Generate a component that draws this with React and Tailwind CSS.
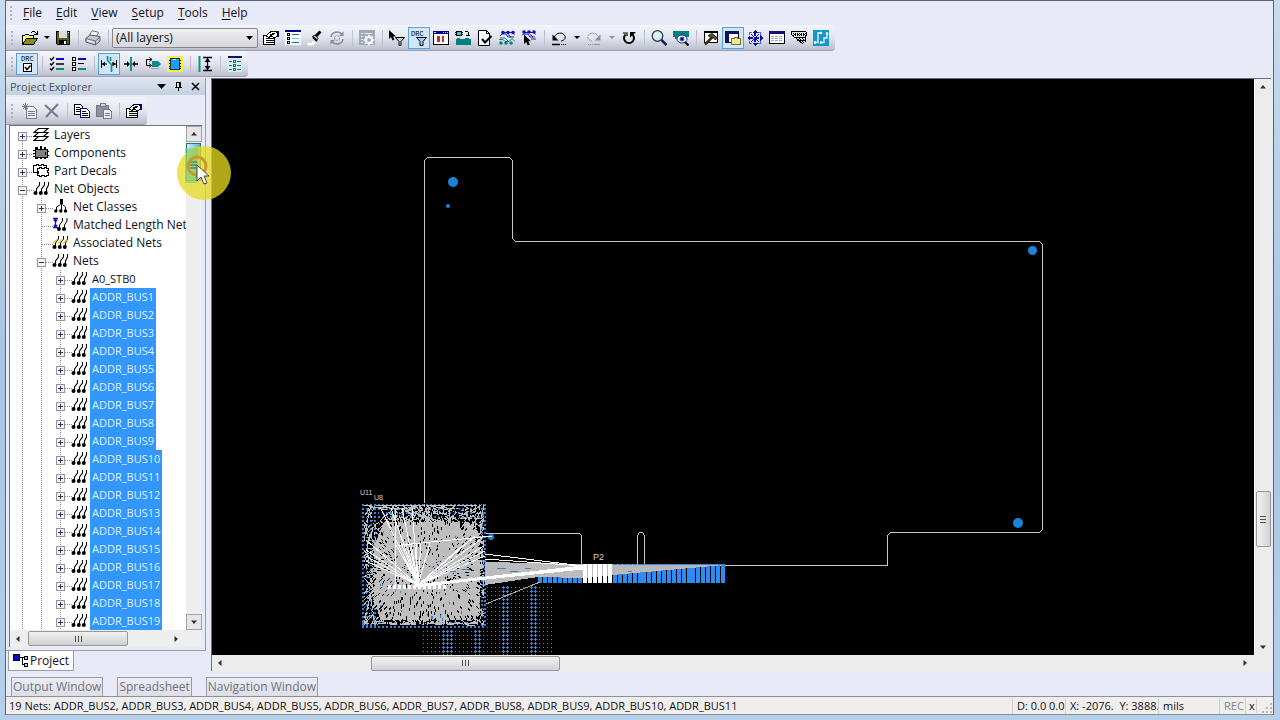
import React, { useState } from 'react'

const FONT = "font-['Open_Sans','Noto_Sans',sans-serif]"

// 16x16 toolbar glyphs, drawn on whole pixels
function Glyph({ children, w = 16, h = 16, smooth = false }) {
  return (
    <svg
      width={w}
      height={h}
      viewBox={`0 0 ${w} ${h}`}
      className="block shrink-0"
      fill="none"
      stroke="#000"
      shapeRendering={smooth ? 'auto' : 'crispEdges'}
      aria-hidden="true"
    >
      {children}
    </svg>
  )
}

const sheetLines = 'M3 8.5h8M3 10.5h8M3 12.5h8'

const icons = {
  open: (
    <Glyph>
      <path d="M0.5 14.5v-9h2l1-1h3l1 1h4v3" fill="#f4f08a" />
      <path d="M0.5 14.5l4-6h11l-4 6z" fill="#8c8c1a" />
      <path d="M9 2.5h1M10 1.5h3M13 2.5h1M14 3.5h1M15.5 1v4M12 4.5h4" />
    </Glyph>
  ),
  save: (
    <Glyph>
      <path d="M1.5 1.5h13v13h-12l-1-1z" fill="#5b5b10" />
      <path d="M4 1h8v7H4z" fill="#d8dbe4" stroke="none" />
      <path d="M4 10h8v5H4z" fill="#000" stroke="none" />
      <path d="M9 11h2v3H9zM13 2h1v1h-1z" fill="#fff" stroke="none" />
    </Glyph>
  ),
  print: (
    <Glyph smooth>
      <path d="M4.5 5L7 .8l6.500 1.500-2 4.700z" fill="#fff" stroke="#777" />
      <path d="M.8 8.500L5 5l10 1.500v4.500l-4.500 4-9.700-3z" fill="#c6c8d0" stroke="#5a5d66" />
      <path d="M.8 8.500l9.700 2.500 4.500-4M10.500 11v4" stroke="#6c6f78" />
      <path d="M2.500 10.500l6 1.800" stroke="#fff" />
    </Glyph>
  ),
  props: (
    <Glyph>
      <path d="M.5 5.500h11v9H.5z" fill="#fff" />
      <path d={sheetLines} />
      <path d="M3 6l5-4.500h5l2 1.500v3l-2 1h-3L8 5.500 6 7.500z" fill="#fff" />
      <path d="M7 4l4 1M9 3.500h3" />
      <path d="M14 1h2v6h-2z" fill="#000090" stroke="none" />
    </Glyph>
  ),
  list: (
    <Glyph>
      <path d="M0 1h16v14H0z" fill="#fff" stroke="none" />
      <path d="M0 0h16v2H0z" fill="#000090" stroke="none" />
      <path d="M2.500 3.500h2v2h-2zM2.500 7.500h2v2h-2zM2.500 11.500h2v2h-2z" />
      <path d="M7 4.500h7M7 12.500h7" stroke="#207070" />
      <path d="M7 8.500h7" stroke="#58d0e8" />
    </Glyph>
  ),
  brush: (
    <Glyph smooth>
      <path d="M0 13h5l1-2 3 2-3 2.500H1z" fill="#fff" stroke="none" />
      <path d="M5.500 6.500l4 4 1.500-2-3-3.500z" fill="#ddd" />
      <path d="M9 6l4.500-4.500" strokeWidth="3" />
      <path d="M6 7l4 4" strokeWidth="2" />
    </Glyph>
  ),
  refresh: (
    <Glyph smooth>
      <path d="M2 7a6 5.500 0 0 1 11-2.500M14 9A6 5.500 0 0 1 3 11.500" stroke="#858a96" strokeWidth="1.500" />
      <path d="M14.500 1.500v4.500H10zM1.500 14.500V10H6z" fill="#858a96" stroke="none" />
      <circle cx="8" cy="8" r="2.500" stroke="#858a96" strokeDasharray="2 1" />
    </Glyph>
  ),
  gearWindow: (
    <Glyph smooth>
      <path d="M0 0h16v15H0z" fill="#a3a8b6" stroke="none" />
      <path d="M2 3.500h2M5 3.500h8M2 6.500h2M2 9.500h2M2 12.500h2" stroke="#e8eaf2" />
      <circle cx="10" cy="10" r="3" stroke="#fff" strokeWidth="2" />
      <path d="M10 4.500v2M10 13.500v2M4.500 10h2M13.500 10h2M6.200 6.200l1.500 1.500M12.500 12.500l1.500 1.500M13.800 6.200l-1.500 1.500M6.200 13.800l1.500-1.500" stroke="#fff" strokeWidth="1.500" />
    </Glyph>
  ),
  selectFilter: (
    <Glyph smooth>
      <path d="M0 0v9l2-2 1.500 3.500 2-1L4 6.500h3z" fill="#000" stroke="none" />
      <path d="M6.500 7.500h9l-3.500 4v4h-2v-4z" fill="#c8ccd6" />
    </Glyph>
  ),
  drcFilter: (
    <Glyph w={20} h={18} smooth>
      <text x="2" y="7" fontSize="7" fill="#000" stroke="none" className="font-['Liberation_Mono',monospace]">DRC</text>
      <path d="M7.500 8.500h10l-3.500 4v4h-3v-4z" fill="#9fd0f0" />
    </Glyph>
  ),
  columns: (
    <Glyph>
      <path d="M.5 1.500h15v13H.5z" fill="#fff" />
      <path d="M0 1h16v3H0z" fill="#000090" stroke="none" />
      <path d="M1 2.500h2M10 2.500h1M12 2.500h1M14 2.500h1" stroke="#d8d8e8" />
      <path d="M4 6h3v6H4zM9 6h2v6H9z" fill="#c03030" stroke="none" />
    </Glyph>
  ),
  swapPart: (
    <Glyph>
      <path d="M1.500 1.500h5v4h-5z" fill="#40c0c0" />
      <path d="M0 2.500h1M0 4.500h1M7 2.500h1M7 4.500h1M10 1.500h3M13.500 2v3M11 5.500h4" />
      <path d="M1 9h15v6H1z" fill="#008078" stroke="none" />
      <path d="M2 8.500h3M10 8.500h4" stroke="#008078" />
    </Glyph>
  ),
  docCheck: (
    <Glyph smooth>
      <path d="M1.500.5h8l3 3v12h-11z" fill="#fff" />
      <path d="M9.500.5v3h3" />
      <path d="M5 9l3 3.500L14.500 6" strokeWidth="2.200" />
    </Glyph>
  ),
  dotsNets: (
    <Glyph smooth>
      <path d="M3 2.500h11l1.500 2M1 6l2-2h4l2 3h6M9 4.500l3 2.500" stroke="#2020b0" />
      <g fill="#1010b0" stroke="none"><circle cx="4" cy="2.500" r="1.800" /><circle cx="9" cy="2.500" r="1.800" /><circle cx="14" cy="2.500" r="1.800" /></g>
      <path d="M0 9.500h4l2 2h4l3-3 3 3M1 8h5l3 3" stroke="#108080" />
      <g fill="#088080" stroke="none"><circle cx="2" cy="13" r="1.800" /><circle cx="7" cy="13" r="1.800" /><circle cx="12" cy="13" r="1.800" /></g>
    </Glyph>
  ),
  dotsCursor: (
    <Glyph smooth>
      <path d="M2 2.500h11l1.500 2M1 5l2-1h4l2 3h5M9 4.500l3 2.500M10 9h5" stroke="#2020b0" />
      <g fill="#1010b0" stroke="none"><circle cx="3" cy="2" r="1.800" /><circle cx="8" cy="2" r="1.800" /><circle cx="13" cy="2" r="1.800" /></g>
      <path d="M3 4.500v9.500l2.200-2 1.600 3.500 2-1-1.500-3.200H10z" fill="#000" stroke="none" />
    </Glyph>
  ),
  undo: (
    <Glyph smooth>
      <path d="M3.500 7C5 2.500 12 1.500 14 6c1 3-1.500 4.500-4 5" />
      <path d="M1.500 4.500v6h6z" fill="#000" stroke="none" />
      <path d="M1 14.500h8" strokeWidth="1.500" />
      <path d="M10 14.500h6" strokeDasharray="1 1" />
    </Glyph>
  ),
  redo: (
    <Glyph smooth>
      <path d="M12.500 7C11 2.500 4 1.500 2 6c-1 3 1.500 4.500 4 5" stroke="#8a8f9b" strokeDasharray="2 .8" />
      <path d="M14.500 4.500v6h-6z" fill="#8a8f9b" stroke="none" />
      <path d="M2 14.500h5" stroke="#8a8f9b" strokeDasharray="1 1" />
      <path d="M8 14.500h6" stroke="#8a8f9b" />
    </Glyph>
  ),
  reload: (
    <Glyph smooth>
      <path d="M4.500 4.500a5 5 0 1 0 7 0" strokeWidth="2" />
      <path d="M9 2h6L9 7.500z" fill="#000" stroke="none" />
      <path d="M2 3h4v3" strokeWidth="1.200" />
    </Glyph>
  ),
  magnifier: (
    <Glyph smooth>
      <circle cx="6.500" cy="6" r="5.300" fill="#c4f0f6" stroke="#333" strokeWidth="1.200" />
      <path d="M4 4l2-1M5 7l4-3" stroke="#fff" strokeWidth="1.500" />
      <path d="M10.500 10l5 5" stroke="#102070" strokeWidth="2.500" />
    </Glyph>
  ),
  boardEye: (
    <Glyph smooth>
      <path d="M0 1h16v6h-2v2H2V7H0z" fill="#008080" stroke="none" />
      <ellipse cx="9" cy="9" rx="5" ry="4" fill="#fff" stroke="#203060" />
      <circle cx="9" cy="9" r="2" fill="#0000b0" stroke="#4060d0" />
      <path d="M12 12l3.500 3.500" strokeWidth="2" />
    </Glyph>
  ),
  hammer: (
    <Glyph smooth>
      <path d="M1.500 2.500h13v10h-13z" fill="#fff" />
      <path d="M1 2h14" strokeWidth="2" />
      <path d="M2 14.500l8-8" stroke="#3a2810" strokeWidth="2.500" />
      <path d="M5 5.500l4-2 5 4-1.500 2.500-3-3H7z" fill="#5c5c38" stroke="#222" />
    </Glyph>
  ),
  folderWindow: (
    <Glyph>
      <path d="M.5 1.500h13v11H.5z" fill="#fff" />
      <path d="M0 1h14v3H0zM0 4h4v9H0z" fill="#101060" stroke="none" />
      <path d="M6.500 14.500v-6h3v-1h3v1h3v6z" fill="#ece98a" stroke="#77742e" />
    </Glyph>
  ),
  pan: (
    <Glyph>
      <path d="M8 1v14M1 8h14" stroke="#0c0cb0" strokeWidth="2" strokeDasharray="5 1" />
      <path d="M4 4l3 3M12 4L9 7M4 12l3-3M12 12L9 9" stroke="#0c0cb0" />
      <path d="M8 0l3 3H5zM8 16l3-3H5zM0 8l3-3v6zM16 8l-3-3v6z" fill="#0c0cb0" stroke="none" />
      <path d="M2.500 5V2.500H5M11 2.500h2.500V5M2.500 11v2.500H5M13.500 11v2.500H11" stroke="#5060d0" />
    </Glyph>
  ),
  table: (
    <Glyph>
      <path d="M.5 1.500h15v12H.5z" fill="#fff" />
      <path d="M0 1h16v3H0z" fill="#101080" stroke="none" />
      <path d="M2 6.500h12M2 8.500h12M2 10.500h12" stroke="#9aa" strokeDasharray="3 1" />
    </Glyph>
  ),
  mesh: (
    <Glyph>
      <path d="M.5 1.500h14l1 1v3l-2 2H3.500l-3-3z" fill="#e4e4e0" />
      <path d="M2 3.500h13M2 5.500h13" strokeDasharray="1 1" />
      <path d="M3 4.500h12M4 7.500h10" strokeDasharray="2 1" />
      <path d="M5 8l7 6M8 8l5 5M11 8l3 3M14.500 7v5M6 10.500h7" />
    </Glyph>
  ),
  traceBlue: (
    <Glyph smooth>
      <path d="M0 0h16v16H0z" fill="#1296cc" stroke="none" />
      <path d="M1.500 12.500H5V3h3M8.500 12.500H11V8h3V4" stroke="#e8f8ff" strokeWidth="1.300" />
      <g fill="#fff" stroke="none"><circle cx="8" cy="3" r="1.300" /><circle cx="14" cy="3.500" r="1.300" /><circle cx="2" cy="12.500" r="1.300" /><circle cx="8" cy="12.500" r="1.300" /></g>
    </Glyph>
  ),
  drcCheck: (
    <Glyph w={18} h={18}>
      <text x="3" y="6" fontSize="7" fill="#000" stroke="none" className="font-['Liberation_Mono',monospace]">DRC</text>
      <path d="M5.500 8.500h8v8h-8z" fill="#fff" />
      <path d="M7 12l2 2.500 3.500-4" strokeWidth="1.500" shapeRendering="auto" />
    </Glyph>
  ),
  checks: (
    <Glyph smooth>
      <path d="M1 2.500l1.500 1.500L5 1M1 7.500L2.500 9 5 6M1 12.500L2.500 14 5 11" strokeWidth="1.300" />
      <path d="M7 3h8" stroke="#0a0ab8" strokeWidth="2" />
      <path d="M7 8h8" strokeWidth="1.500" />
      <path d="M7 13h8" stroke="#10887c" strokeWidth="2" />
    </Glyph>
  ),
  boxes: (
    <Glyph>
      <path d="M1.500 1.500h3v3h-3zM1.500 6.500h3v3h-3zM1.500 11.500h3v3h-3z" fill="#fff" />
      <path d="M7 2h8v2H7z" fill="#0a0ab8" stroke="none" />
      <path d="M7 7h6v1H7z" fill="#000" stroke="none" />
      <path d="M7 12h8v2H7z" fill="#10887c" stroke="none" />
    </Glyph>
  ),
  netSpacing: (
    <Glyph smooth>
      <path d="M.5 4v8M15.500 4v8M1 8h5M11 8h4" />
      <path d="M1 8l3-2.500v5zM14.500 8l-3-2.500v5z" fill="#000" stroke="none" />
      <path d="M6.500 0v4.500l4 4V16M9.500 1v4" stroke="#109088" strokeWidth="1.600" />
    </Glyph>
  ),
  converge: (
    <Glyph smooth>
      <path d="M8 1v14" stroke="#109088" strokeWidth="2" />
      <path d="M1 8h5M10 8h5" strokeWidth="1.300" />
      <path d="M7 8L4 5v6zM9 8l3-3v6z" fill="#000" stroke="none" />
    </Glyph>
  ),
  shove: (
    <Glyph smooth>
      <path d="M6.500 3.500H1.500v6h4M4.500 1.500l2.500 2-2.500 2M4 7.500l2.500 2L4 11.500" />
      <path d="M7 5h6l3 3-3 3H7z" fill="#0c8c88" stroke="none" />
      <path d="M6 12.500h8" stroke="#8ab" />
    </Glyph>
  ),
  chip: (
    <Glyph>
      <path d="M0 0h16v16H0z" fill="#f7ee5c" stroke="none" />
      <path d="M2 4.500h12M2 7.500h12M2 10.500h12M2 12.500h12" />
      <path d="M3.500 2.500h9v11h-9z" fill="#1c9ef0" stroke="#103060" />
      <path d="M6 3.500h3" stroke="#fff" />
    </Glyph>
  ),
  height: (
    <Glyph smooth>
      <path d="M2.500 0v16" stroke="#109088" strokeWidth="2" />
      <path d="M6 1.500h9M6 14.500h9M10.500 2v12" strokeWidth="1.300" />
      <path d="M10.500 2l3 4h-6zM10.500 14l3-4h-6z" fill="#000" stroke="none" />
    </Glyph>
  ),
  grid: (
    <Glyph>
      <path d="M1 2h14v14H1z" fill="#d7ecec" stroke="none" />
      <path d="M1 0h14v2H1z" fill="#10106c" stroke="none" />
      <path d="M2 5.500h3M10 5.500h4M2 9.500h3M10 9.500h4M2 13.500h3M10 13.500h4" stroke="#187878" />
      <path d="M6.500 4.500h2v2h-2zM6.500 8.500h2v2h-2zM6.500 12.500h2v2h-2z" stroke="#187878" />
    </Glyph>
  ),
  newSheet: (
    <Glyph>
      <path d="M4.500 3.500h7l3 3v9h-10z" fill="#eef0f6" stroke="#777c88" />
      <path d="M6 8.500h7M6 10.500h7M6 12.500h7M1 1l5 5M6 1L1 6M0 3.500h7M3.500 0v7" stroke="#777c88" />
    </Glyph>
  ),
  remove: (
    <Glyph smooth>
      <path d="M1 2l13 12M14 1L2 14" stroke="#767b88" strokeWidth="2" />
    </Glyph>
  ),
  copy: (
    <Glyph>
      <path d="M.5 1.500h6l2 2v8h-8z" fill="#fff" />
      <path d="M2 4.500h4M2 6.500h4M2 8.500h4" />
      <path d="M6.500 5.500h6l3 3v6h-9z" fill="#fff" stroke="#0a0a80" />
      <path d="M8 8.500h4M8 10.500h6M8 12.500h6" />
    </Glyph>
  ),
  paste: (
    <Glyph>
      <path d="M.5 2.500h12v11H.5z" fill="#8d92a0" stroke="#767b88" />
      <path d="M4 .5h5v3H4z" fill="#d5d8e2" stroke="#767b88" />
      <path d="M7.500 6.500h6l2 2v7h-8z" fill="#eef0f6" stroke="#767b88" />
      <path d="M9 10.500h5M9 12.500h5" stroke="#767b88" />
    </Glyph>
  ),
  layers: (
    <Glyph smooth>
      <path d="M1 13.500l4.500-4h9.500l-4.500 4zM1 9.500l4.500-4h9.500l-4.500 4zM1 5.500l4.500-4h9.500l-4.500 4z" fill="#fff" strokeWidth="1.200" />
    </Glyph>
  ),
  components: (
    <Glyph>
      <path d="M2 2h3v2H2zM7 1h2v3H7zM11 2h2v2h-2zM2 12h3v2H2zM7 12h2v2H7zM11 12h2v2h-2z" fill="#000" stroke="none" />
      <path d="M2.500 4.500h12v8h-12z" fill="#808080" />
      <path d="M0 5.500h3M0 8.500h3M0 11.500h3M14 6.500h2M14 10.500h2M12.500 7v3" />
    </Glyph>
  ),
  decals: (
    <Glyph>
      <path d="M.5 2.500h3v-1h2v1h3v-1h2v1h3v7H.5z" fill="#fff" />
      <path d="M4.500 5.500h2v-1h2v1h3v-1h2v1h2v2h-1v2h1v3h-2v1h-2v-1h-3v1h-2v-1h-2v-2h1v-2h-1z" fill="#fff" />
    </Glyph>
  ),
  nets: (
    <Glyph smooth>
      <path d="M6.500 1v3L3.500 8v4M11.500 1v3l-3 4v4M15.500 1v3l-2 4v4" strokeWidth="1.100" />
      <g fill="#000" stroke="none"><circle cx="2.500" cy="12" r="2" /><circle cx="7.800" cy="12" r="2" /><circle cx="12.800" cy="12" r="2" /></g>
    </Glyph>
  ),
  netClasses: (
    <Glyph smooth>
      <path d="M8 0h3v5H8z" fill="#000" stroke="none" />
      <path d="M9.500 5v8M8.500 5.500L4.500 8v4M10.500 5.500l3 2.500v4" />
      <g fill="#000" stroke="none"><circle cx="3.800" cy="12" r="1.700" /><circle cx="8.800" cy="12" r="1.700" /><circle cx="13.500" cy="12" r="1.700" /></g>
    </Glyph>
  ),
  matched: (
    <Glyph smooth>
      <path d="M1 1.500h5M1 10.500h5M3.500 2v8M2 4l1.500-2L5 4M2 8l1.500 2L5 8" stroke="#1010b8" strokeWidth="1.300" />
      <path d="M10.500 1v3l-3 4v4M15 1v3l-2.500 4v4" />
      <g fill="#000" stroke="none"><circle cx="7" cy="12" r="2" /><circle cx="12" cy="12" r="2" /></g>
    </Glyph>
  ),
  associated: (
    <Glyph smooth>
      <path d="M6.500 1v3L3.500 8v4M11.500 1v3l-3 4v4M15.500 1v3l-2 4v4" />
      <path d="M1 8.500L5 4.500M6 8.500l4-4M11 8.500l4-4" stroke="#d8d820" strokeWidth="1.500" />
      <g fill="#000" stroke="none"><circle cx="2.500" cy="12" r="2" /><circle cx="7.800" cy="12" r="2" /><circle cx="12.800" cy="12" r="2" /></g>
    </Glyph>
  ),
  project: (
    <Glyph>
      <path d="M.5 1.500h6v6h-6z" fill="#0a0ac8" />
      <path d="M7 4.500h4M9.500 4v8M9 11.500h2" />
      <path d="M11.500 3.500h3v3h-3zM11.500 10.500h3v3h-3z" fill="#b8d8b0" />
    </Glyph>
  ),
}

function ToolButton({ icon, label, active, disabled }) {
  return (
    <button
      type="button"
      aria-label={label}
      disabled={disabled}
      className={`flex h-[22px] w-[22px] shrink-0 items-center justify-center border ${
        active ? 'border-[#58a0dc] bg-[#d2e6f9]' : 'border-transparent hover:border-[#58a0dc]'
      }`}
    >
      {icons[icon]}
    </button>
  )
}

function Caret({ label, disabled, wide }) {
  return (
    <button type="button" aria-label={label} className={`flex h-[22px] shrink-0 items-center justify-center ${wide ? 'w-[13px]' : 'w-[11px]'}`}>
      <svg width="6" height="3" className="block" aria-hidden="true">
        <path d="M0 0h6L3 3z" fill={disabled ? '#8a8f9b' : '#000'} />
      </svg>
    </button>
  )
}

function Sep() {
  return (
    <span className="flex w-2 shrink-0 justify-center">
      <span className="h-4 w-px bg-[#bcc0cc]" />
    </span>
  )
}

function Grip() {
  return (
    <span className="mr-[6px] ml-1 flex w-[2px] shrink-0 flex-col gap-[2px]">
      {[0, 1, 2, 3].map((n) => (
        <span key={n} className="h-[2px] w-[2px] bg-[#b0b4c2]" />
      ))}
    </span>
  )
}

const menus = ['File', 'Edit', 'View', 'Setup', 'Tools', 'Help']

const mainTools = [
  ['props', 'Properties'],
  ['list', 'Display list'],
  ['brush', 'Highlight'],
  ['refresh', 'Refresh', 'disabled'],
  null,
  ['gearWindow', 'Options', 'disabled'],
  null,
  ['selectFilter', 'Selection filter'],
  ['drcFilter', 'DRC filter', 'active'],
  ['columns', 'Columns'],
  ['swapPart', 'Swap part'],
  ['docCheck', 'Verify'],
  ['dotsNets', 'Net pairs'],
  ['dotsCursor', 'Select nets'],
  null,
]

const viewTools = [
  ['hammer', 'Build'],
  ['folderWindow', 'Project explorer', 'active'],
  ['pan', 'Pan'],
  ['table', 'Spreadsheet'],
  ['mesh', 'Mesh'],
  ['traceBlue', 'Router'],
]

const routeTools = [
  ['drcCheck', 'DRC on', 'active'],
  null,
  ['checks', 'Check list'],
  ['boxes', 'Box list'],
  null,
  ['netSpacing', 'Net spacing', 'active'],
  ['converge', 'Converge'],
  ['shove', 'Shove'],
  ['chip', 'Component'],
  null,
  ['height', 'Length'],
  null,
  ['grid', 'Rules'],
]

function Tools({ items }) {
  return items.map((t, i) =>
    t ? (
      <ToolButton key={i} icon={t[0]} label={t[1]} active={t[2] === 'active'} disabled={t[2] === 'disabled'} />
    ) : (
      <Sep key={i} />
    )
  )
}

const barStyle =
  'flex w-fit shrink-0 items-center rounded-r-[4px] border-b border-[#9a9eae] bg-linear-to-b from-[#f4f5fc] via-[#e2e4ee] to-[#bdc0ce]'

function TopBars() {
  const [layer, setLayer] = useState('all')
  return (
    <header className="shrink-0">
      <nav className="flex h-6 items-center">
        <Grip />
        <div className="-ml-[2px] flex">
          {menus.map((m) => (
            <button key={m} type="button" className="px-[7px] text-[12px] leading-4 text-[#101018]">
              <span className="underline underline-offset-2">{m[0]}</span>
              {m.slice(1)}
            </button>
          ))}
        </div>
      </nav>
      <div className={`${barStyle} h-[26px] pr-[3px] pl-px`}>
        <Grip />
        <ToolButton icon="open" label="Open" />
        <Caret label="Recent files" />
        <ToolButton icon="save" label="Save" />
        <Sep />
        <ToolButton icon="print" label="Print" />
        <Sep />
        <div className="relative mr-[2px] flex w-[146px]">
          <select
            aria-label="Layer"
            value={layer}
            onChange={(e) => setLayer(e.target.value)}
            className="h-5 w-full appearance-none rounded-[2px] border border-[#85878f] bg-linear-to-b from-[#f0f0f1] to-[#d6d7da] pl-[3px] text-[12px] leading-4 text-[#101018]"
          >
            <option value="all">(All layers)</option>
          </select>
          <svg width="7" height="4" className="pointer-events-none absolute top-2 right-[5px]" aria-hidden="true">
            <path d="M0 0h7L3.500 4z" />
          </svg>
        </div>
        <Tools items={mainTools} />
        <ToolButton icon="undo" label="Undo" />
        <Caret label="Undo history" wide />
        <ToolButton icon="redo" label="Redo" disabled />
        <Caret label="Redo history" wide disabled />
        <ToolButton icon="reload" label="Redraw" />
        <Sep />
        <ToolButton icon="magnifier" label="Zoom" />
        <ToolButton icon="boardEye" label="View board" />
        <Sep />
        <Tools items={viewTools} />
      </div>
      <div className={`${barStyle} h-[26px] pr-[2px] pl-px`}>
        <span className="-mr-[3px] flex">
          <Grip />
        </span>
        <Tools items={routeTools} />
      </div>
    </header>
  )
}

const tree = [
  { depth: 0, icon: 'layers', label: 'Layers', box: '+' },
  { depth: 0, icon: 'components', label: 'Components', box: '+' },
  { depth: 0, icon: 'decals', label: 'Part Decals', box: '+' },
  { depth: 0, icon: 'nets', label: 'Net Objects', box: '-' },
  { depth: 1, icon: 'netClasses', label: 'Net Classes', box: '+' },
  { depth: 1, icon: 'matched', label: 'Matched Length Net', box: '' },
  { depth: 1, icon: 'associated', label: 'Associated Nets', box: '' },
  { depth: 1, icon: 'nets', label: 'Nets', box: '-' },
  { depth: 2, icon: 'nets', label: 'A0_STB0', box: '+' },
  ...Array.from({ length: 19 }, (_, i) => ({
    depth: 2,
    icon: 'nets',
    label: `ADDR_BUS${i + 1}`,
    box: '+',
    selected: true,
  })),
]

function Branch({ level, row, first }) {
  const own = level === row.depth
  return (
    <svg width="19" height="18" className="block shrink-0" shapeRendering="crispEdges" aria-hidden="true">
      <path d={first && level === 0 ? 'M7.500 9v9' : 'M7.500 0v18'} stroke="#8c8c8c" strokeDasharray="1 1" />
      {own && <path d="M8 10.500h11" stroke="#8c8c8c" strokeDasharray="1 1" />}
      {own && row.box && (
        <g>
          <rect x="3.500" y="6.500" width="8" height="8" fill="#f6f6f8" stroke="#92959c" />
          <path d={row.box === '+' ? 'M5 10.500h5M7.500 8v5' : 'M5 10.500h5'} stroke="#28325c" />
        </g>
      )}
    </svg>
  )
}

function TreeRow({ row, first }) {
  return (
    <li className="flex h-[18px] items-center whitespace-nowrap">
      {Array.from({ length: row.depth + 1 }, (_, l) => (
        <Branch key={l} level={l} row={row} first={first} />
      ))}
      <span className="-ml-px">{icons[row.icon]}</span>
      <button
        type="button"
        className={`ml-[3px] h-[18px] px-[2px] leading-[18px] ${row.depth === 2 ? 'text-[11px]' : 'text-[12px]'} ${
          row.selected ? 'bg-[#3296fa] text-[#dff2ff]' : 'text-[#101018]'
        }`}
      >
        {row.label}
      </button>
    </li>
  )
}

function Arrow({ dir, label, framed }) {
  const shapes = {
    up: 'M1 5.500h6L4 2z',
    down: 'M1 2.500h6L4 6z',
    left: 'M5.500 1v6L2 4z',
    right: 'M2.500 1v6L6 4z',
  }
  return (
    <button
      type="button"
      aria-label={label}
      className={`flex h-4 w-4 shrink-0 items-center justify-center ${framed ? 'border border-[#a4a4a8] bg-[#e6e6e8]' : ''}`}
    >
      <svg width="8" height="8" className="block" aria-hidden="true">
        <path d={shapes[dir]} fill="#303034" />
      </svg>
    </button>
  )
}

function ClickMarker() {
  return (
    <svg width="56" height="56" className="pointer-events-none absolute top-[2px] -left-[10px] z-10" aria-hidden="true">
      <circle cx="28" cy="28" r="27" fill="#e6dc1e" fillOpacity="0.76" />
      <path d="M9 3h13v35H9z" fill="#60c890" fillOpacity="0.5" />
      <path d="M14 17h7M14 20h7M14 23h7" stroke="#3c6070" />
      <circle cx="21" cy="21" r="9" fill="none" stroke="#c89a2c" strokeWidth="3" />
      <path d="M21 20v16l4-4 3 7 3-1-3-7h5z" fill="#fff" stroke="#444" />
    </svg>
  )
}

function Explorer() {
  return (
    <aside className="flex w-[205px] shrink-0 flex-col pr-[5px]">
      <div className="flex min-h-0 flex-1 flex-col border-r border-b border-[#9a9cac] bg-[#e9eaf8]">
        <div className="flex h-[17px] shrink-0 items-center bg-linear-to-b from-[#dfe5f0] to-[#c3d0e0] pr-px pl-1">
          <h2 className="flex-1 text-[11px] leading-4 text-[#50545e]">Project Explorer</h2>
          <button type="button" aria-label="Panel menu" className="flex h-4 w-[17px] items-center justify-center">
            <svg width="9" height="5" aria-hidden="true"><path d="M0 0h9L4.500 5z" /></svg>
          </button>
          <button type="button" aria-label="Auto hide" className="flex h-4 w-[17px] items-center justify-center">
            <svg width="7" height="9" fill="none" stroke="#000" shapeRendering="crispEdges" aria-hidden="true">
              <path d="M1.500 5V.5h4V5M4.500 0v5M0 5.500h7M3.500 6v3" />
            </svg>
          </button>
          <button type="button" aria-label="Close panel" className="flex h-4 w-[17px] items-center justify-center">
            <svg width="9" height="9" aria-hidden="true"><path d="M1 1l7 7M8 1L1 8" stroke="#000" strokeWidth="1.500" /></svg>
          </button>
        </div>
        <div className={`${barStyle} mt-[2px] h-7 pr-[2px] pl-px`}>
          <Grip />
          <ToolButton icon="newSheet" label="New" disabled />
          <ToolButton icon="remove" label="Delete" disabled />
          <Sep />
          <ToolButton icon="copy" label="Copy" />
          <ToolButton icon="paste" label="Paste" disabled />
          <Sep />
          <ToolButton icon="props" label="Item properties" />
        </div>
        <div className="mr-[3px] mb-[3px] ml-[3px] flex min-h-0 flex-1 flex-col border-t border-l border-[#70737c] bg-white">
          <div className="flex min-h-0 flex-1">
            <ul className="min-w-0 flex-1 overflow-hidden pl-[5px]">
              {tree.map((row, i) => (
                <TreeRow key={row.label} row={row} first={i === 0} />
              ))}
            </ul>
            <div className="relative flex w-4 shrink-0 flex-col justify-between bg-[#eeeeee]">
              <div className="flex flex-col">
                <Arrow dir="up" label="Scroll tree up" framed />
                <div className="relative mt-px h-[38px]">
                  <div className="h-full w-[15px] border border-[#2c6c84] bg-linear-to-r from-[#d4f0f4] to-[#58b8c0]" />
                  <ClickMarker />
                </div>
              </div>
              <Arrow dir="down" label="Scroll tree down" framed />
            </div>
          </div>
          <div className="flex h-[17px] shrink-0 items-center bg-[#eeeeee]">
            <Arrow dir="left" label="Scroll tree left" />
            <div className="ml-[2px] flex h-[15px] w-[100px] items-center justify-center gap-[2px] rounded-[2px] border border-[#98989c] bg-linear-to-b from-[#f2f2f2] to-[#cfcfd2]">
              <span className="h-[6px] w-px bg-[#505054]" />
              <span className="h-[6px] w-px bg-[#505054]" />
              <span className="h-[6px] w-px bg-[#505054]" />
            </div>
            <span className="flex-1" />
            <Arrow dir="right" label="Scroll tree right" />
            <span className="w-[18px]" />
          </div>
        </div>
      </div>
      <button
        type="button"
        className="ml-[2px] flex h-5 w-fit shrink-0 items-center gap-[1px] border-r border-b border-l border-[#9a9cac] bg-white pr-1 pl-1 text-[12px] leading-4 text-[#101018]"
      >
        {icons.project}
        Project
      </button>
    </aside>
  )
}

function makeRandom(seed) {
  let s = seed
  return () => {
    s = (s * 1664525 + 1013904223) % 4294967296
    return s / 4294967296
  }
}

// gray unrouted connections, one path for all of them
function ratsnest() {
  const rnd = makeRandom(11)
  let d = ''
  for (let i = 0; i < 460; i++) {
    const x = Math.round(364 + rnd() * 120)
    const y = Math.round(506 + rnd() * 119)
    const x2 = Math.min(484, Math.max(364, Math.round(x + (rnd() - 0.5) * 70)))
    const y2 = Math.min(625, Math.max(505, Math.round(y + (rnd() - 0.5) * 70)))
    d += `M${x} ${y}L${x2} ${y2}`
  }
  return d
}

function specks(seed, count, size) {
  const rnd = makeRandom(seed)
  let d = ''
  for (let i = 0; i < count; i++) {
    const x = Math.round(366 + rnd() * 116)
    const y = Math.round(507 + rnd() * 116)
    const dx = Math.round(((x - 424) / 60) * size)
    const dy = Math.round(((y - 566) / 60) * size)
    d += `M${x} ${y}.5l${dx || 1} ${dy}`
  }
  return d
}

const dot = (x, y, s) => `M${x} ${y}h${s}v${s}h-${s}z`

function padDots() {
  let d = ''
  for (let y = 504; y < 628; y += 4) {
    for (const x of [362, 366, 370, 374, 481, 484]) d += dot(x, y, 2)
  }
  for (let x = 362; x < 486; x += 4) {
    for (const y of [504, 508, 512, 516, 622, 626]) d += dot(x, y, 2)
  }
  return d
}

function viaDots() {
  let d = ''
  const heavy = [443, 447, 451, 475, 479, 503, 507, 531, 535]
  for (let x = 423; x <= 551; x += 4) {
    for (let y = x < 485 ? 631 : 587; y < 656; y += 4) {
      d += dot(x, y, 1)
      if (heavy.includes(x)) d += `M${x - 1} ${y}h3v1h-3zM${x} ${y - 1}h1v3h-1z`
    }
  }
  return d
}

const fan = [
  [380, 507], [391, 508], [402, 508], [412, 508], [395, 543], [401, 543], [406, 543], [411, 543],
  [416, 543], [421, 543], [430, 543], [366, 540], [366, 550], [366, 556], [366, 561],
  [462, 546], [475, 536], [480, 540], [484, 546], [485, 551], [485, 556],
]

const viaPath = viaDots()
const nestPath = ratsnest()
const darkPath = specks(5, 620, 3)
const bluePath = specks(23, 60, 2)
const padPath = padDots()
const fanPath = fan.map(([x, y]) => `M418 585L${x} ${y}`).join('')

function Board() {
  return (
    <svg className="block h-full w-full bg-black" role="img" aria-label="Board layout" fill="none" shapeRendering="crispEdges">
      <g transform="translate(-212 -79)">
        <path
          d="M424.500 503V160.500l3-3H509.500l3 3V238.500l3 3H1039.500l3 3V529.500l-3 3H890.500l-3 3V565.500H583M485 533.500H579.500l2 2V565M637.500 565V535.500l2-3h3l2 3V565"
          stroke="#c4cac8"
        />
        <g fill="#1c84d8" shapeRendering="auto">
          <circle cx="453" cy="182" r="5" />
          <circle cx="448" cy="206" r="2" />
          <circle cx="1032.500" cy="250.500" r="4.500" />
          <circle cx="1018" cy="523" r="5" />
          <circle cx="491" cy="537" r="3" />
        </g>
        <path d={viaPath} fill="#4488dc" />
        <path d={padPath} fill="#3c80d0" />
        <path d="M384 522h88l8 16v76l-6 6h-92l-8-14v-60z" fill="#bcbcbc" />
        <path d={nestPath} stroke="#c0c0c0" />
        <path d="M424.500 504V520M376 505.500h104M366 623.500h115M475.500 506v118" stroke="#c0c0c0" />
        <path d={darkPath} stroke="#000" />
        <path d={bluePath} stroke="#3c80d0" />
        {Array.from({ length: 9 }, (_, i) => (
          <path key={i} d={`M${538 + i * 5} 577h4v6h-4z`} fill="#2c8cf4" />
        ))}
        <path d="M485 562l98 2 140 1-110 10-30 3-45-1-53 8z" fill="#bcbcbc" />
        {Array.from({ length: 23 }, (_, i) => (
          <path key={i} d={`M${Math.round(613 + i * 4.9)} 564h4v19h-4z`} fill="#2c8cf4" />
        ))}
        <path d="M612 565h112l-112 10z" fill="#b8b8b8" />
        <path d="M613 564.500h110" stroke="#3c80d0" strokeDasharray="4 1" />
        <path d="M486 604L540 582" stroke="#a8a8a8" />
        <path d="M450 571h6M462 569h7M497 568h9M510 571h8M525 568h6M498 575h7M628 571h4M620 574h3" stroke="#3c80d0" />
        <path d={fanPath} stroke="#fff" />
        <path d="M418 585L583 566M418 586L583 569M485 554L583 566M485 559L583 566M396 545.500L492 536M395.500 510V586" stroke="#fff" />
        <path d="M388 587h60" stroke="#fff" strokeWidth="4" strokeDasharray="3 2" />
        <path d="M415 586L583 567" stroke="#fff" strokeWidth="3" />
        {[0, 1, 2, 3, 4, 5].map((i) => (
          <path key={i} d={`M${583 + i * 5} 564h4v19h-4z`} fill="#fff" />
        ))}
        <g fill="#d0d0d0" className="font-['Liberation_Sans',sans-serif]">
          <text x="360" y="495" fontSize="7">U11</text>
          <text x="374" y="500" fontSize="7">U8</text>
          <text x="593" y="560" fontSize="9">P2</text>
        </g>
      </g>
    </svg>
  )
}

function Workspace() {
  return (
    <main className="flex min-w-0 flex-1 flex-col border-t border-l border-[#6c6c7c] bg-[#ececec]">
      <div className="flex min-h-0 flex-1">
        <div className="min-h-0 min-w-0 flex-1 overflow-hidden">
          <Board />
        </div>
        <div className="flex w-[17px] shrink-0 flex-col items-center border-l border-white">
          <Arrow dir="up" label="Scroll up" />
          <span className="flex-[397]" />
          <div className="flex h-[56px] w-[15px] flex-col items-center justify-center gap-[2px] rounded-[2px] border border-[#98989c] bg-linear-to-r from-[#f4f4f4] to-[#d2d2d5]">
            <span className="h-px w-[6px] bg-[#505054]" />
            <span className="h-px w-[6px] bg-[#505054]" />
            <span className="h-px w-[6px] bg-[#505054]" />
          </div>
          <span className="flex-[92]" />
          <Arrow dir="down" label="Scroll down" />
        </div>
      </div>
      <div className="flex h-4 shrink-0 items-center">
        <Arrow dir="left" label="Scroll left" />
        <span className="flex-[143]" />
        <div className="flex h-[15px] w-[189px] items-center justify-center gap-[2px] rounded-[2px] border border-[#98989c] bg-linear-to-b from-[#f4f4f4] to-[#d2d2d5]">
          <span className="h-[6px] w-px bg-[#505054]" />
          <span className="h-[6px] w-px bg-[#505054]" />
          <span className="h-[6px] w-px bg-[#505054]" />
        </div>
        <span className="flex-[678]" />
        <Arrow dir="right" label="Scroll right" />
        <span className="w-[18px]" />
      </div>
    </main>
  )
}

const dockTabs = ['Output Window', 'Spreadsheet', 'Navigation Window']

function StatusBar() {
  return (
    <footer className="flex h-[19px] shrink-0 items-center border-t border-b border-[#8e9098] bg-[#f0eeec] text-[11px] leading-4 whitespace-nowrap text-[#101018]">
      <span className="min-w-0 flex-1 overflow-hidden pl-[3px]">
        19 Nets: ADDR_BUS2, ADDR_BUS3, ADDR_BUS4, ADDR_BUS5, ADDR_BUS6, ADDR_BUS7, ADDR_BUS8, ADDR_BUS9, ADDR_BUS10, ADDR_BUS11
      </span>
      <span className="w-[53px] border-l border-[#d0ced0] pl-[4px]">D: 0.0 0.0</span>
      <span className="w-[93px] border-l border-[#d0ced0] pl-[4px]">X: -2076.&nbsp; Y: 3888.</span>
      <span className="w-[61px] border-l border-[#d0ced0] pl-[4px]">mils</span>
      <span className="w-[26px] border-l border-[#d0ced0] pl-[4px] text-[#85858a]">REC</span>
      <span className="w-[11px] border-l border-[#d0ced0] pl-[3px]">x</span>
      <svg width="17" height="14" className="border-l border-[#d0ced0]" aria-hidden="true">
        <path d="M13 4h2v2h-2zM9 8h2v2H9zM13 8h2v2h-2zM5 12h2v2H5zM9 12h2v2H9zM13 12h2v2h-2z" fill="#b8b8b8" />
      </svg>
    </footer>
  )
}

export default function App() {
  return (
    <div className={`flex h-screen w-full flex-col bg-linear-to-b from-[#c8dcee] via-[#a8c4e0] to-[#b4d0ea] pr-[6px] pb-[5px] pl-[5px] ${FONT}`}>
      <div className="flex min-h-0 flex-1 flex-col border-t border-r border-l border-[#5c6478] bg-[#e9eaf8]">
        <TopBars />
        <div className="mt-px mr-[2px] flex min-h-0 flex-1">
          <Explorer />
          <Workspace />
        </div>
        <div className="flex h-[25px] shrink-0 items-end gap-[14px] pl-[5px]">
          {dockTabs.map((t) => (
            <button
              key={t}
              type="button"
              className="h-[19px] border-t border-r border-l border-[#9a9cac] bg-linear-to-b from-[#ecedf4] to-[#dcdde6] px-px text-[12px] leading-[18px] text-[#70747e]"
            >
              {t}
            </button>
          ))}
        </div>
        <StatusBar />
      </div>
    </div>
  )
}
